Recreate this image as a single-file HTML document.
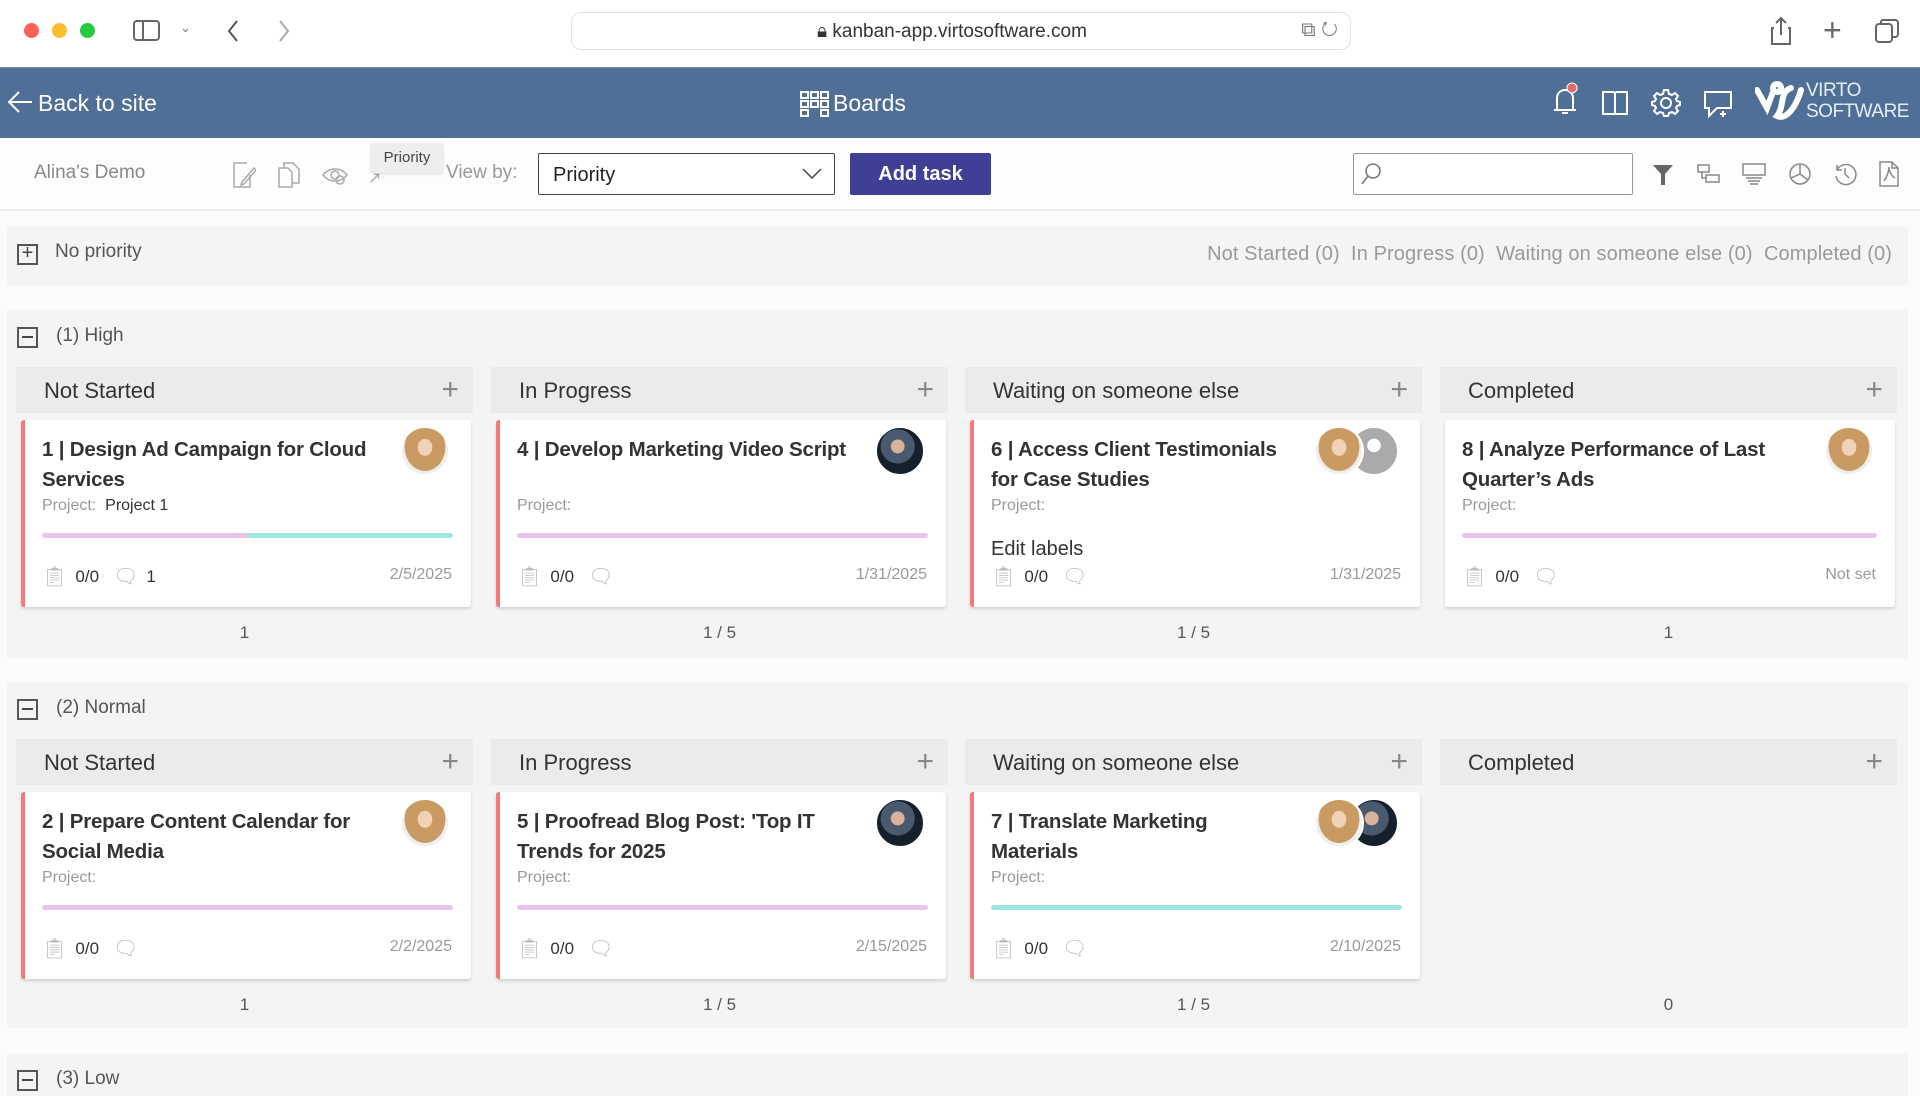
<!DOCTYPE html>
<html><head><meta charset="utf-8">
<style>
*{box-sizing:border-box;margin:0;padding:0}
body{width:1920px;height:1096px;overflow:hidden;background:#fbfbfb;font-family:"Liberation Sans",sans-serif;position:relative;color:#333}
.a{position:absolute}
.browser{left:0;top:0;width:1920px;height:67px;background:#fff}
.dot{width:15px;height:15px;border-radius:50%;top:23px}
.url{left:571px;top:12px;width:780px;height:38px;border:1px solid #e2e2e2;border-radius:10px;background:#fff}
.hdr{left:0;top:67px;width:1920px;height:71px;background:#4f6f96;border-top:1px solid #6d89ab;color:#fff}
.tb{left:0;top:138px;width:1920px;height:73px;background:#fdfdfd;border-bottom:2px solid #eee}
.sec{left:7px;width:1901px;background:#f4f4f5}
.lbl{font-size:19px;color:#555}
.box{width:21px;height:21px;border:2px solid #555;}
.colh{height:46px;background:#ebebeb;width:457px}
.colh span{position:absolute;left:28px;top:11px;font-size:22px;color:#333}
.colh i{position:absolute;right:14px;top:6px;font-style:normal;font-size:30px;color:#888;font-weight:300}
.card{width:450px;height:187px;background:#fff;box-shadow:0 2px 3px rgba(0,0,0,.15);border-radius:3px}
.card.r{border-left:4px solid #f27a7a}
.tt{position:absolute;left:17px;top:15px;width:345px;font-size:20.5px;line-height:30px;font-weight:bold;color:#333;letter-spacing:-.2px}
.tt.n{width:300px}
.pj{position:absolute;left:17px;top:77px;font-size:16px;color:#999}
.pj b{font-weight:normal;color:#333}
.bar{position:absolute;left:17px;right:18px;top:113px;height:5px;border-radius:3px;background:#e8c3ec}
.ft{position:absolute;left:17px;top:144px;font-size:17px;color:#333;display:flex;align-items:center;gap:8px}
.ft span{font-size:20px}
.dt{position:absolute;right:19px;top:146px;font-size:16px;color:#999}
.av{position:absolute;top:6px;width:50px;height:50px;border-radius:50%;border:2px solid #fff}
.w{background:radial-gradient(ellipse at 50% 42%,#f0d2b8 0 22%,#c99a62 23% 62%,#eee 63%)}
.m{background:radial-gradient(circle at 45% 40%,#d9b29a 0 18%,#4a5a6e 19% 45%,#16202c 46%)}
.g{background:radial-gradient(circle at 50% 38%,#fff 0 18%,#aaa 19% 100%)}
.cnt{font-size:17px;color:#555;width:457px;text-align:center}
</style></head><body>

<div class="a browser">
 <div class="a dot" style="left:24px;background:#fe5f57"></div>
 <div class="a dot" style="left:52px;background:#febc2e"></div>
 <div class="a dot" style="left:80px;background:#28c840"></div>
 <svg class="a" style="left:133px;top:20px" width="28" height="22"><rect x="1" y="1" width="25" height="19" rx="3" fill="none" stroke="#666" stroke-width="2"/><line x1="10" y1="1" x2="10" y2="20" stroke="#666" stroke-width="2"/></svg>
 <div class="a" style="left:180px;top:20px;color:#777;font-size:13px">⌄</div>
 <svg class="a" style="left:226px;top:19px" width="14" height="24"><path d="M11 2 L3 12 L11 22" fill="none" stroke="#555" stroke-width="2"/></svg>
 <svg class="a" style="left:277px;top:19px" width="14" height="24"><path d="M3 2 L11 12 L3 22" fill="none" stroke="#aaa" stroke-width="2"/></svg>
 <div class="a url"><div class="a" style="left:245px;top:8px;font-size:19px;color:#333">🔒︎ kanban-app.virtosoftware.com</div>
  <div class="a" style="right:12px;top:6px;font-size:20px;color:#777">⧉ ↻</div></div>
 <svg class="a" style="left:1770px;top:16px" width="22" height="30"><path d="M4 12 H2 V28 H20 V12 H18 M11 2 V19 M6 7 L11 2 L16 7" fill="none" stroke="#666" stroke-width="2"/></svg>
 <div class="a" style="left:1823px;top:12px;font-size:32px;color:#666;font-weight:300">+</div>
 <svg class="a" style="left:1874px;top:18px" width="26" height="26"><rect x="2" y="6" width="16" height="18" rx="3" fill="none" stroke="#666" stroke-width="2"/><path d="M7 6 V4 a2 2 0 0 1 2 -2 H21 a3 3 0 0 1 3 3 V16 a3 3 0 0 1 -3 3 H18" fill="none" stroke="#666" stroke-width="2"/></svg>
</div>

<div class="a hdr">
 <svg class="a" style="left:6px;top:22px" width="28" height="24"><path d="M26 12 H3 M13 2 L3 12 L13 22" fill="none" stroke="#fff" stroke-width="2"/></svg>
 <div class="a" style="left:38px;top:22px;font-size:23px">Back to site</div>
 <svg class="a" style="left:800px;top:23px" width="29" height="26"><g fill="none" stroke="#fff" stroke-width="2"><rect x="1" y="1" width="7" height="6"/><rect x="11" y="1" width="7" height="6"/><rect x="21" y="1" width="7" height="6"/><rect x="1" y="10" width="7" height="6"/><rect x="11" y="10" width="7" height="6"/><rect x="21" y="10" width="7" height="6"/><rect x="1" y="19" width="7" height="6"/><rect x="21" y="19" width="7" height="6"/></g></svg>
 <div class="a" style="left:833px;top:22px;font-size:23px">Boards</div>
 <svg class="a" style="left:1551px;top:14px" width="28" height="36"><path d="M6 28 V16 a8 8 0 0 1 16 0 V28 Z M3 28 H25 M11 31 H17" fill="none" stroke="#fff" stroke-width="2"/><circle cx="21" cy="6" r="5" fill="#e46a6a" stroke="#fff" stroke-width="1"/></svg>
 <svg class="a" style="left:1601px;top:22px" width="28" height="26"><path d="M2 2 H12 a2 2 0 0 1 2 2 V24 H2 Z M26 2 H16 a2 2 0 0 0 -2 2 V24 H26 Z" fill="none" stroke="#fff" stroke-width="2"/></svg>
 <svg class="a" style="left:1651px;top:20px" width="30" height="30"><g fill="none" stroke="#fff" stroke-width="2"><circle cx="15" cy="15" r="5"/><path d="M13 2 H17 L18 6 L21 7 L24 5 L27 8 L25 11 L26 13 L29 14 V17 L26 18 L25 20 L27 23 L24 26 L21 24 L18 25 L17 28 H13 L12 25 L9 24 L6 26 L3 23 L5 20 L4 18 L1 17 V14 L4 13 L5 11 L3 8 L6 5 L9 7 L12 6 Z"/></g></svg>
 <svg class="a" style="left:1703px;top:22px" width="30" height="28"><path d="M2 2 H28 V18 H14 L6 26 V18 H2 Z" fill="none" stroke="#fff" stroke-width="2"/><path d="M20 21 V27 M17 24 H23" stroke="#fff" stroke-width="2"/></svg>
 <svg class="a" style="left:1755px;top:12px" width="50" height="45"><path d="M2 10 L12 28 L18 12 M22 4 a4 4 0 1 0 0.1 0 M36 8 C24 12 30 26 22 36 C30 40 40 30 46 10" fill="none" stroke="#fff" stroke-width="6" stroke-linecap="round"/></svg>
 <div class="a" style="left:1806px;top:12px;font-size:19px;line-height:21px;color:#e6edf5;letter-spacing:-.5px">VIRTO<br>SOFTWARE</div>
</div>

<div class="a tb">
 <div class="a" style="left:34px;top:24px;font-size:19px;color:#888">Alina's Demo</div>
 <svg class="a" style="left:232px;top:24px" width="24" height="26"><g fill="none" stroke="#aaa" stroke-width="1.5"><path d="M15 1 H2 V25 H18 V13 M10 20 L22 6 L24 8 L12 22 L9 23 Z"/></g></svg>
 <svg class="a" style="left:278px;top:24px" width="22" height="26"><g fill="none" stroke="#aaa" stroke-width="1.5"><path d="M6 6 V1 H15 L21 7 V21 H14 M1 6 H10 L14 10 V25 H1 Z"/></g></svg>
 <svg class="a" style="left:322px;top:28px" width="26" height="20"><g fill="none" stroke="#aaa" stroke-width="1.5"><path d="M1 9 C7 1 19 1 25 9 C19 17 7 17 1 9 Z"/><circle cx="13" cy="9" r="4"/><circle cx="18" cy="14" r="4"/></g></svg>
 <div class="a" style="left:368px;top:30px;font-size:16px;color:#aaa">↗</div>
 <div class="a" style="left:371px;top:5px;width:72px;height:30px;background:#eee;border-radius:3px;font-size:15px;color:#444;text-align:center;line-height:30px;box-shadow:0 1px 3px rgba(0,0,0,.15)">Priority</div>
 <div class="a" style="left:446px;top:24px;font-size:19px;color:#999">View by:</div>
 <div class="a" style="left:538px;top:15px;width:297px;height:42px;border:1.5px solid #444;border-radius:2px;background:#fff">
  <div class="a" style="left:14px;top:10px;font-size:20px;color:#222">Priority</div>
  <svg class="a" style="right:12px;top:14px" width="20" height="12"><path d="M1 1 L10 10 L19 1" fill="none" stroke="#444" stroke-width="1.5"/></svg></div>
 <div class="a" style="left:850px;top:15px;width:141px;height:42px;background:#3f3f95;border-radius:2px;color:#fff;font-size:20px;font-weight:bold;text-align:center;line-height:42px">Add task</div>
 <div class="a" style="left:1353px;top:15px;width:280px;height:42px;border:1.5px solid #999;border-radius:2px;background:#fff">
  <svg class="a" style="left:6px;top:8px" width="22" height="24"><circle cx="13" cy="9" r="7" fill="none" stroke="#777" stroke-width="1.5"/><path d="M8 14 L2 22" stroke="#777" stroke-width="1.5"/></svg></div>
 <svg class="a" style="left:1652px;top:26px" width="22" height="22"><path d="M1 1 H21 L13 10 V21 H9 V10 Z" fill="#666"/></svg>
 <svg class="a" style="left:1697px;top:26px" width="24" height="20"><g fill="none" stroke="#888" stroke-width="1.5"><rect x="1" y="1" width="11" height="7"/><rect x="9" y="11" width="13" height="7"/><path d="M5 8 V14 H9"/></g></svg>
 <svg class="a" style="left:1742px;top:25px" width="24" height="22"><g fill="none" stroke="#888" stroke-width="1.5"><rect x="1" y="1" width="22" height="11"/><path d="M4 15 H20 M6 18 H18 M8 21 H16"/></g></svg>
 <svg class="a" style="left:1788px;top:24px" width="24" height="24"><g fill="none" stroke="#888" stroke-width="1.5"><circle cx="12" cy="12" r="10"/><path d="M12 2 V12 L20 18 M12 12 L3 16"/></g></svg>
 <svg class="a" style="left:1833px;top:24px" width="24" height="24"><g fill="none" stroke="#888" stroke-width="1.5"><path d="M4 8 A10 10 0 1 1 3 14 M4 3 V8 H9 M12 6 V12 L16 16"/></g></svg>
 <svg class="a" style="left:1879px;top:23px" width="20" height="26"><g fill="none" stroke="#888" stroke-width="1.5"><path d="M1 1 H13 L19 7 V25 H1 Z M13 1 V7 H19 M5 20 C8 16 10 10 10 6 C10 12 14 16 16 17"/></g></svg>
</div>

<div class="a sec" style="top:227px;height:58px">
 <div class="a box" style="left:10px;top:17px;text-align:center;line-height:15px;font-size:20px;color:#444">+</div>
 <div class="a lbl" style="left:48px;top:14px">No priority</div>
 <div class="a" style="right:16px;top:16px;font-size:20px;color:#999;letter-spacing:.1px">Not Started (0)&nbsp; In Progress (0)&nbsp; Waiting on someone else (0)&nbsp; Completed (0)</div>
</div>

<div class="a sec" style="top:310px;height:348px">
 <div class="a box" style="left:10px;top:17px"><div class="a" style="left:3px;top:7px;width:11px;height:2px;background:#444"></div></div>
 <div class="a lbl" style="left:49px;top:15px">(1) High</div>
</div>
<div class="a sec" style="top:683px;height:345px">
 <div class="a box" style="left:10px;top:16px"><div class="a" style="left:3px;top:7px;width:11px;height:2px;background:#444"></div></div>
 <div class="a lbl" style="left:49px;top:14px">(2) Normal</div>
</div>
<div class="a sec" style="top:1054px;height:42px">
 <div class="a box" style="left:10px;top:16px"><div class="a" style="left:3px;top:7px;width:11px;height:2px;background:#444"></div></div>
 <div class="a lbl" style="left:49px;top:14px">(3) Low</div>
</div>

<div class="a colh" style="left:16px;top:367px"><span>Not Started</span><i>+</i></div>
<div class="a colh" style="left:491px;top:367px"><span>In Progress</span><i>+</i></div>
<div class="a colh" style="left:965px;top:367px"><span>Waiting on someone else</span><i>+</i></div>
<div class="a colh" style="left:1440px;top:367px"><span>Completed</span><i>+</i></div>
<div class="a colh" style="left:16px;top:739px"><span>Not Started</span><i>+</i></div>
<div class="a colh" style="left:491px;top:739px"><span>In Progress</span><i>+</i></div>
<div class="a colh" style="left:965px;top:739px"><span>Waiting on someone else</span><i>+</i></div>
<div class="a colh" style="left:1440px;top:739px"><span>Completed</span><i>+</i></div>

<div class="a card r" style="left:21px;top:420px">
 <div class="tt">1 | Design Ad Campaign for Cloud Services</div>
 <div class="pj">Project:&nbsp; <b>Project 1</b></div>
 <div class="bar" style="background:linear-gradient(90deg,#e8c3ec 50%,#9ee6e2 50%)"></div>
 <div class="ft"><span style="color:#bbb">📋︎</span>0/0 <span style="color:#bbb;margin-left:6px">🗨︎</span>1</div>
 <div class="dt">2/5/2025</div>
 <div class="av w" style="right:21px"></div>
</div>
<div class="a card r" style="left:496px;top:420px">
 <div class="tt" style="width:380px">4 | Develop Marketing Video Script</div>
 <div class="pj">Project:</div>
 <div class="bar"></div>
 <div class="ft"><span style="color:#bbb">📋︎</span>0/0 <span style="color:#bbb;margin-left:6px">🗨︎</span></div>
 <div class="dt">1/31/2025</div>
 <div class="av m" style="right:21px"></div>
</div>
<div class="a card r" style="left:970px;top:420px">
 <div class="tt n">6 | Access Client Testimonials for Case Studies</div>
 <div class="pj">Project:</div>
 <div class="a" style="left:17px;top:118px;font-size:20px;color:#333">Edit labels</div>
 <div class="ft"><span style="color:#bbb">📋︎</span>0/0 <span style="color:#bbb;margin-left:6px">🗨︎</span></div>
 <div class="dt">1/31/2025</div>
 <div class="av g" style="right:21px"></div>
 <div class="av w" style="right:56px"></div>
</div>
<div class="a card" style="left:1445px;top:420px">
 <div class="tt">8 | Analyze Performance of Last Quarter’s Ads</div>
 <div class="pj">Project:</div>
 <div class="bar"></div>
 <div class="ft"><span style="color:#bbb">📋︎</span>0/0 <span style="color:#bbb;margin-left:6px">🗨︎</span></div>
 <div class="dt">Not set</div>
 <div class="av w" style="right:21px"></div>
</div>
<div class="a cnt" style="left:16px;top:623px">1</div>
<div class="a cnt" style="left:491px;top:623px">1 / 5</div>
<div class="a cnt" style="left:965px;top:623px">1 / 5</div>
<div class="a cnt" style="left:1440px;top:623px">1</div>

<div class="a card r" style="left:21px;top:792px">
 <div class="tt">2 | Prepare Content Calendar for Social Media</div>
 <div class="pj">Project:</div>
 <div class="bar"></div>
 <div class="ft"><span style="color:#bbb">📋︎</span>0/0 <span style="color:#bbb;margin-left:6px">🗨︎</span></div>
 <div class="dt">2/2/2025</div>
 <div class="av w" style="right:21px"></div>
</div>
<div class="a card r" style="left:496px;top:792px">
 <div class="tt">5 | Proofread Blog Post: 'Top IT Trends for 2025</div>
 <div class="pj">Project:</div>
 <div class="bar"></div>
 <div class="ft"><span style="color:#bbb">📋︎</span>0/0 <span style="color:#bbb;margin-left:6px">🗨︎</span></div>
 <div class="dt">2/15/2025</div>
 <div class="av m" style="right:21px"></div>
</div>
<div class="a card r" style="left:970px;top:792px">
 <div class="tt n">7 | Translate Marketing Materials</div>
 <div class="pj">Project:</div>
 <div class="bar" style="background:#9ee6e2"></div>
 <div class="ft"><span style="color:#bbb">📋︎</span>0/0 <span style="color:#bbb;margin-left:6px">🗨︎</span></div>
 <div class="dt">2/10/2025</div>
 <div class="av m" style="right:21px"></div>
 <div class="av w" style="right:56px"></div>
</div>
<div class="a cnt" style="left:16px;top:995px">1</div>
<div class="a cnt" style="left:491px;top:995px">1 / 5</div>
<div class="a cnt" style="left:965px;top:995px">1 / 5</div>
<div class="a cnt" style="left:1440px;top:995px">0</div>

</body></html>
